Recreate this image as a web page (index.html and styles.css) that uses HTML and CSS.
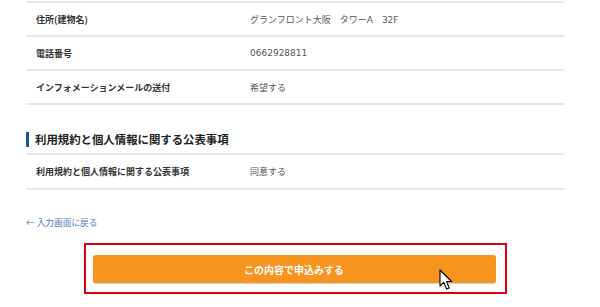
FILE: index.html
```html
<!DOCTYPE html>
<html lang="ja">
<head>
<meta charset="utf-8">
<link rel="stylesheet" href="styles.css">
</head>
<body>
<div class="page">
  <div class="table">
    <div class="row"><div class="label">住所(建物名)</div><div class="value">グランフロント大阪　タワーA　32F</div></div>
    <div class="row"><div class="label">電話番号</div><div class="value">0662928811</div></div>
    <div class="row"><div class="label">インフォメーションメールの送付</div><div class="value">希望する</div></div>
  </div>
  <h2 class="heading"><span class="heading-text">利用規約と個人情報に関する公表事項</span></h2>
  <div class="table">
    <div class="row row-tall"><div class="label">利用規約と個人情報に関する公表事項</div><div class="value">同意する</div></div>
  </div>
  <a class="back" href="#">← 入力画面に戻る</a>
  <div class="submit-wrap">
    <div class="highlight">
      <button class="submit" type="button">この内容で申込みする</button>
      <svg class="cursor" width="14" height="22" viewBox="0 0 14 22">
        <path d="M1 1 L1 17 L4.8 13.4 L7.6 20 L10.2 18.9 L7.5 12.5 L12.6 12.5 Z" fill="#fff" stroke="#000" stroke-width="1.1" stroke-linejoin="round"/>
      </svg>
    </div>
  </div>
</div>
</body>
</html>
```

FILE: styles.css
```css
html, body {
  margin: 0;
  padding: 0;
  background: #fff;
}
body {
  font-family: "DejaVu Sans", "Noto Sans CJK JP", sans-serif;
  color: #333;
}
.page {
  width: 538px;
  margin-left: 26px;
  padding-top: 1px;
}
.table {
  border-top: 2px solid #e8e8e8;
}
.heading + .table {
  border-top: none;
}
.row {
  display: grid;
  grid-template-columns: 224px 1fr;
  align-items: center;
  height: 32px;
  border-bottom: 2px solid #e8e8e8;
  font-size: 9px;
}
.row-tall {
  height: 33px;
}
.label {
  padding-left: 10px;
  font-family: "Noto Sans CJK JP", sans-serif;
  font-weight: 700;
  color: #333;
}
.value {
  color: #555;
  font-family: "DejaVu Sans", "Noto Sans CJK JP", sans-serif;
}
.heading {
  margin: 24px 0 0;
  padding: 3px 0 6px;
  border-bottom: 2px solid #e8e8e8;
  font-family: "Noto Sans CJK JP", sans-serif;
  font-size: 11.4px;
  font-weight: 700;
  color: #222;
  display: flex;
}
.heading-text {
  border-left: 3px solid #1b5496;
  padding-left: 6px;
  line-height: 15px;
  height: 15px;
  display: flex;
  align-items: center;
}
.back {
  display: block;
  margin-top: 26px;
  line-height: 14px;
  height: 14px;
  font-family: "Noto Sans CJK JP", sans-serif;
  font-size: 8.7px;
  color: #4f7db5;
  text-decoration: none;
}
.submit-wrap {
  display: flex;
  justify-content: center;
  margin-top: 13px;
}
.highlight {
  position: relative;
  width: 407px;
  padding: 10px 5px 9px 7px;
  border: 2px solid #d9000f;
}
.submit {
  display: block;
  width: 403px;
  height: 28px;
  border: none;
  border-radius: 3px;
  background: #f7941f;
  box-shadow: 0 1px 1px rgba(0,0,0,0.18);
  color: #fff;
  font-family: "Noto Sans CJK JP", sans-serif;
  font-size: 10px;
  font-weight: 700;
  padding: 0;
}
.cursor {
  position: absolute;
  left: 353px;
  top: 24px;
}
```
